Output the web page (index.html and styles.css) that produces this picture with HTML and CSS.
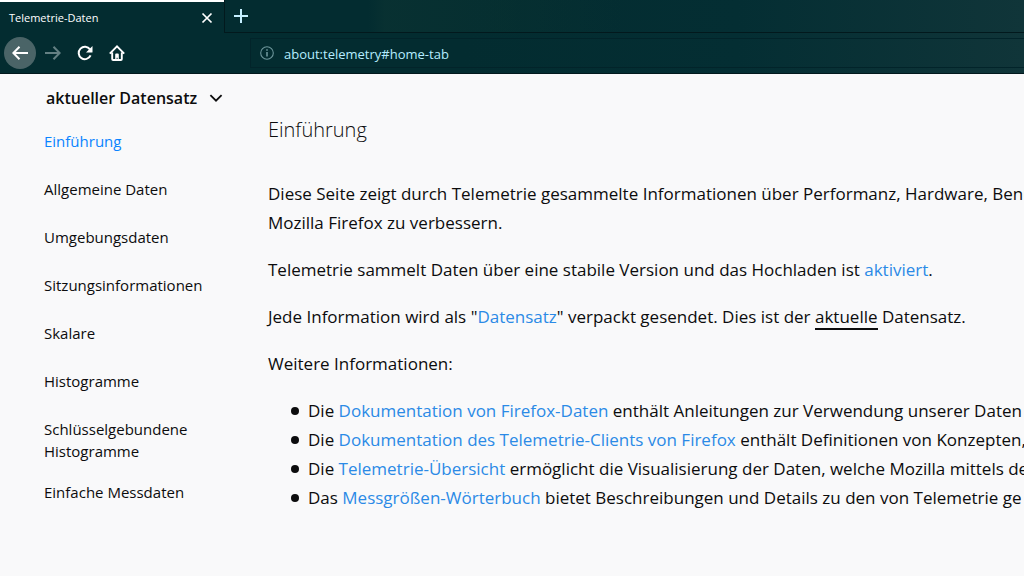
FILE: index.html
```html
<!DOCTYPE html>
<html lang="de">
<head>
<meta charset="utf-8">
<title>Telemetrie-Daten</title>
<link rel="stylesheet" href="styles.css">
</head>
<body>
<header class="browser">
  <div class="tabs">
    <div class="tab">
      <span class="tab-title">Telemetrie-Daten</span>
      <button class="icon-button close" aria-label="Tab schließen">
        <svg width="16" height="16" viewBox="0 0 16 16"><path d="M3.5 3.5l9 9M12.5 3.5l-9 9" stroke-width="1.7"/></svg>
      </button>
    </div>
    <div class="tab-strip">
      <button class="icon-button new-tab" aria-label="Neuer Tab">
        <svg width="16" height="16" viewBox="0 0 16 16"><path d="M8 1v14M1 8h14" stroke-width="2"/></svg>
      </button>
    </div>
  </div>
  <div class="toolbar">
    <nav class="nav-buttons" aria-label="Navigation">
      <button class="icon-button back" aria-label="Zurück">
        <svg width="16" height="16" viewBox="0 0 16 16"><path d="M16 8H1.5M7.5 1.8L1.4 8l6.1 6.2" stroke-width="2"/></svg>
      </button>
      <button class="icon-button forward" aria-label="Vor" disabled>
        <svg width="16" height="16" viewBox="0 0 16 16"><path d="M0 8H14.5M8.5 1.8L14.6 8l-6.1 6.2" stroke-width="2"/></svg>
      </button>
      <button class="icon-button" aria-label="Neu laden">
        <svg width="16" height="16" viewBox="0 0 16 16"><path d="M13.6 10.4A6.2 6.2 0 1 1 13 4.4" stroke-width="2"/><path class="solid" d="M15.5 1v6a.6.6 0 0 1-.6.6H9z"/></svg>
      </button>
      <button class="icon-button" aria-label="Startseite">
        <svg width="16" height="16" viewBox="0 0 16 16"><path d="M.8 8.6L8 1.4l7.2 7.2M3.2 7.5v6.6q0 .9.9.9h7.8q.9 0 .9-.9V7.5" stroke-width="1.9"/><path class="solid" d="M6.2 15V9.5q0-.9.9-.9h1.8q.9 0 .9.9V15H8.6v-2.3H7.6V15z"/></svg>
      </button>
    </nav>
    <div class="url-bar">
      <svg class="info" width="14" height="14" viewBox="0 0 14 14"><circle cx="7" cy="7" r="6.3" stroke-width="1.1"/><path d="M7 6v4.5M7 3.2v1.6" stroke-width="1.6"/></svg>
      <input class="url" type="text" aria-label="Adresse" value="about:telemetry#home-tab">
    </div>
  </div>
</header>
<div class="page">
  <aside class="sidebar">
    <button class="dataset">
      <span>aktueller Datensatz</span>
      <svg width="14" height="14" viewBox="0 0 14 14"><path d="M1.4 4.2L7 9.7l5.6-5.5" stroke-width="1.8"/></svg>
    </button>
    <nav class="categories" aria-label="Kategorien">
      <a class="category selected" href="#home-tab">Einführung</a>
      <a class="category" href="#general">Allgemeine Daten</a>
      <a class="category" href="#environment">Umgebungsdaten</a>
      <a class="category" href="#session">Sitzungsinformationen</a>
      <a class="category" href="#scalars">Skalare</a>
      <a class="category" href="#histograms">Histogramme</a>
      <a class="category" href="#keyed-histograms">Schlüsselgebundene Histogramme</a>
      <a class="category" href="#simple">Einfache Messdaten</a>
    </nav>
  </aside>
  <main class="content">
    <h1 class="heading">Einführung</h1>
    <p>Diese Seite zeigt durch Telemetrie gesammelte Informationen über Performanz, Hardware, Benu<br>Mozilla Firefox zu verbessern.</p>
    <p>Telemetrie sammelt Daten über eine stabile Version und das Hochladen ist <a href="#enabled">aktiviert</a>.</p>
    <p>Jede Information wird als "<a href="#ping">Datensatz</a>" verpackt gesendet. Dies ist der <span class="current">aktuelle</span> Datensatz.</p>
    <p>Weitere Informationen:</p>
    <ul class="links">
      <li>Die <a href="#data-docs">Dokumentation von Firefox-Daten</a> enthält Anleitungen zur Verwendung unserer Daten</li>
      <li>Die <a href="#client-docs">Dokumentation des Telemetrie-Clients von Firefox</a> enthält Definitionen von Konzepten,</li>
      <li>Die <a href="#dashboard">Telemetrie-Übersicht</a> ermöglicht die Visualisierung der Daten, welche Mozilla mittels de</li>
      <li>Das <a href="#dictionary">Messgrößen-Wörterbuch</a> bietet Beschreibungen und Details zu den von Telemetrie ge</li>
    </ul>
  </main>
</div>
</body>
</html>
```
FILE: styles.css
```css
* { box-sizing: border-box; }
body {
  margin: 0;
  min-height: 100vh;
  background: #f9f9fa;
  color: #0c0c0d;
  font-family: "Open Sans", "Noto Sans", sans-serif;
  overflow-x: hidden;
}
button { margin: 0; padding: 0; border: 0; background: none; color: inherit; font: inherit; }
svg { display: block; fill: none; stroke: currentColor; }
.solid { fill: currentColor; stroke: none; }

.browser {
  background: linear-gradient(90deg, #032c30 0%, #032c30 45%, #042e33 72%, #103539 100%);
  color: #fff;
}
.tabs { display: flex; height: 33px; }
.tab {
  display: flex;
  align-items: center;
  justify-content: space-between;
  width: 224px;
  padding: 0 9px;
  border-top: 2px solid #fff;
}
.tab-title { font-size: 11px; line-height: 16px; }
.icon-button { display: flex; align-items: center; justify-content: center; width: 32px; height: 32px; border-radius: 50%; }
.close { width: 16px; height: 16px; }
.tab-strip {
  flex: 1;
  border-left: 1px solid #02191d;
  border-bottom: 1px solid #02191d;
  background: linear-gradient(90deg, transparent 18%, #0d353380 20%, #0b343155 35%, transparent 50%);
}
.new-tab { color: #c5efff; }
.toolbar { display: flex; align-items: center; height: 41px; border-bottom: 1px solid #02191d; }
.nav-buttons { display: flex; width: 250px; padding-left: 4px; }
.nav-buttons .icon-button + .icon-button { padding-left: 2px; }
.back { background: #4a6467; }
.forward { color: #648083; }
.url-bar {
  display: flex;
  flex: 1;
  align-items: center;
  gap: 10px;
  height: 30px;
  padding-left: 9px;
  border: 1px solid #02242a;
  border-right: 0;
}
.info { color: #6d969b; }
.url {
  flex: 1;
  min-width: 0;
  padding: 2px 0 0;
  border: 0;
  outline: 0;
  background: none;
  color: #b5ecff;
  font: 13px/20px "Open Sans", "Noto Sans", sans-serif;
}

.page { display: flex; }
.sidebar { flex: none; width: 240px; padding-top: 12px; }
.dataset {
  display: flex;
  align-items: center;
  gap: 12px;
  margin-left: 46px;
  height: 24px;
  font-size: 16px;
  font-weight: 600;
  white-space: nowrap;
}
.categories { display: flex; flex-direction: column; padding: 7px 32px 0 44px; }
.category {
  min-height: 48px;
  padding: 13px 0 6px;
  color: inherit;
  font-size: 15px;
  line-height: 22px;
  text-decoration: none;
}
.selected { color: #0a84ff; }
.content {
  flex: 1;
  min-width: 0;
  padding: 40px 0 0 28px;
  overflow: hidden;
  white-space: nowrap;
  font-size: 17px;
  line-height: 29px;
}
.heading { margin: 0 0 33px; font-size: 20px; line-height: 32px; font-weight: 300; }
.content p { margin: 0 0 18px; }
.content a { color: #2b8ae6; text-decoration: none; }
.current { border-bottom: 2px solid #0c0c0d; }
.links { margin: 0; padding-left: 40px; list-style: none; }
.links li::before {
  content: "";
  display: inline-block;
  width: 8px;
  height: 8px;
  margin: 0 9px 0 -17px;
  border-radius: 50%;
  background: #0c0c0d;
  vertical-align: 2px;
}
```
